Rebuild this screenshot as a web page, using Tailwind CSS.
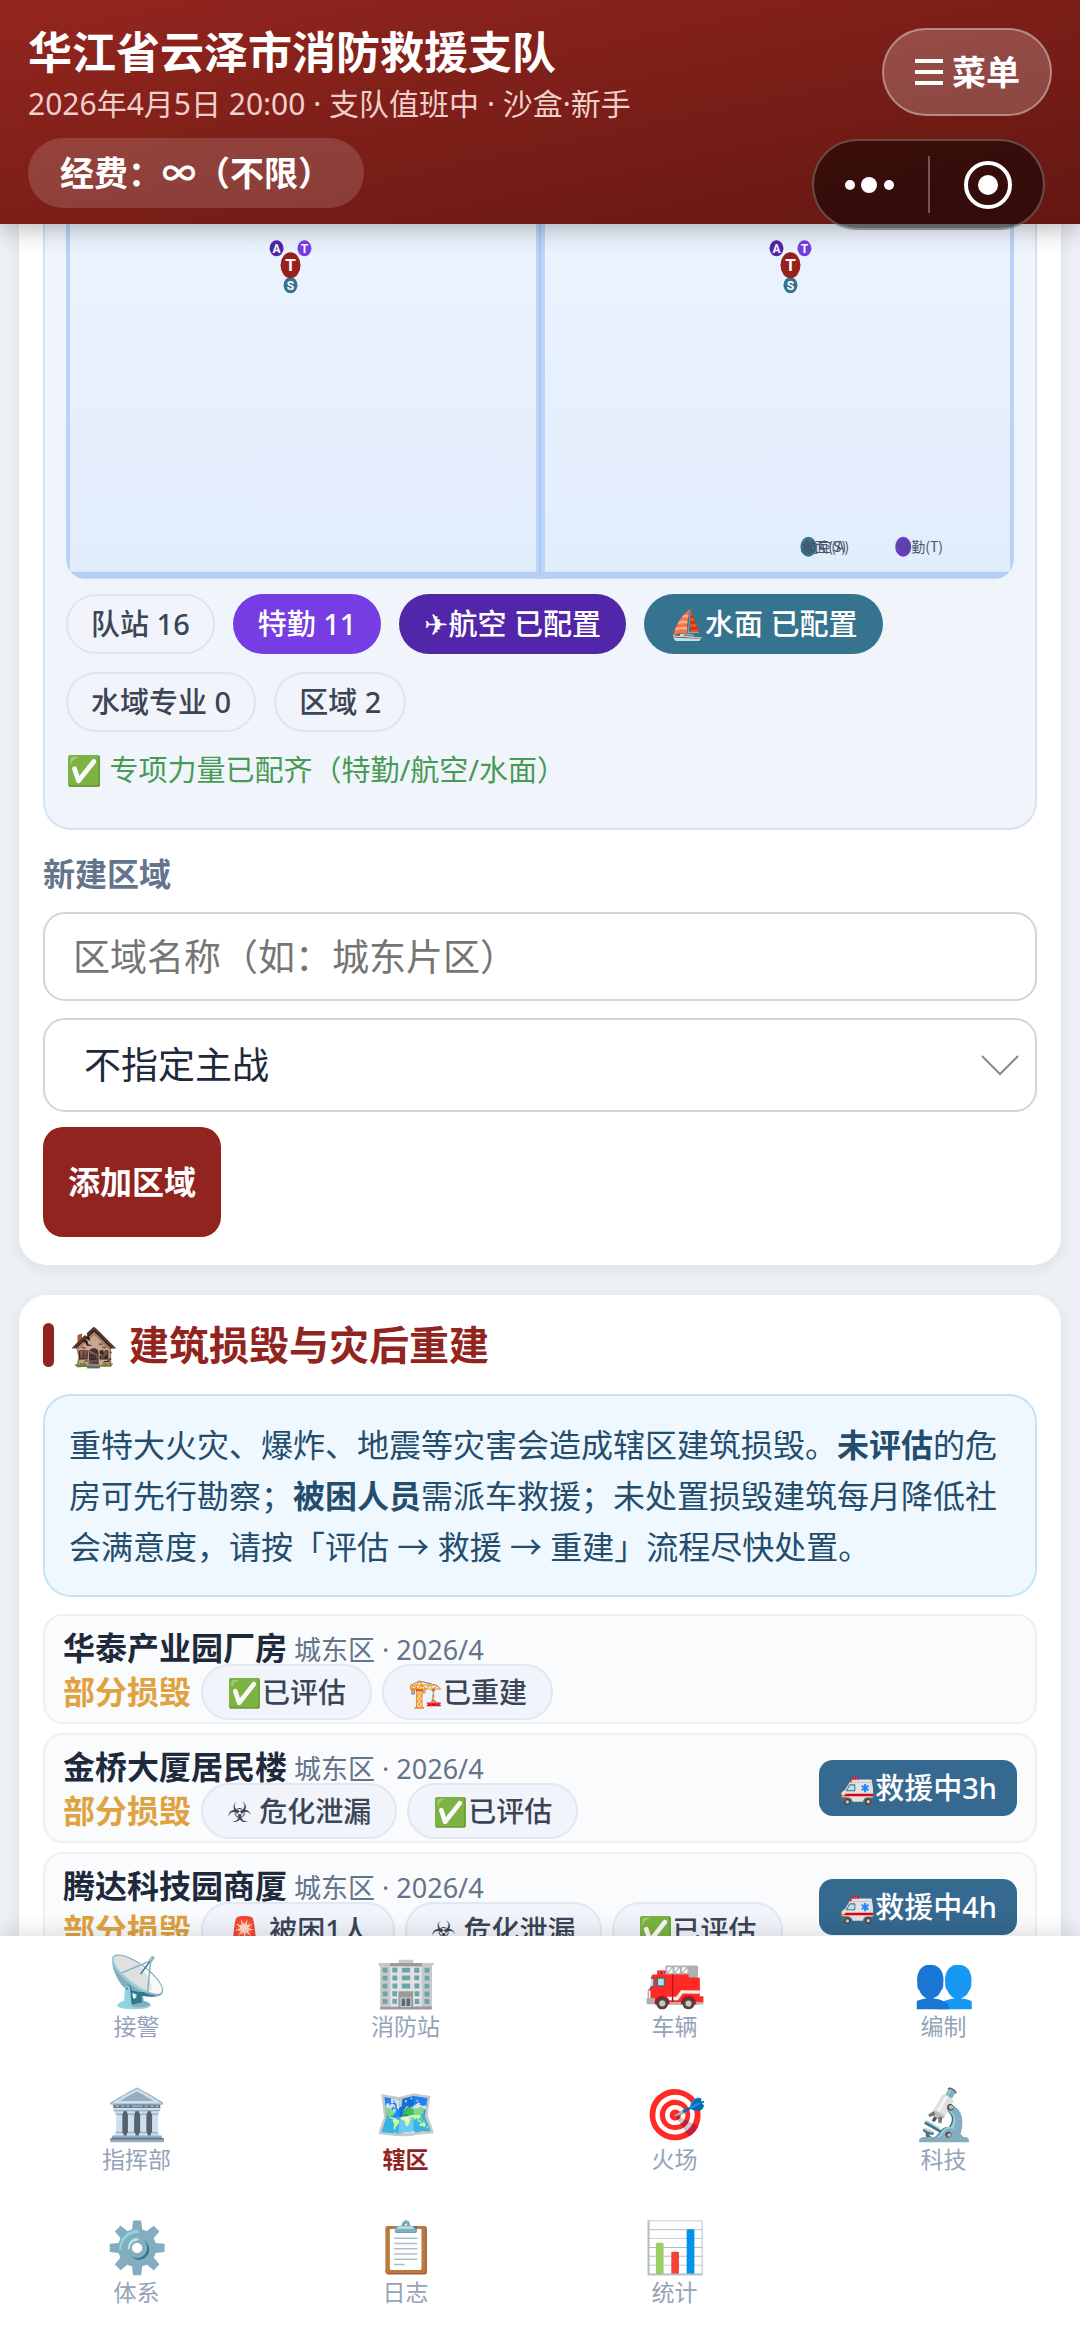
<!DOCTYPE html>
<html lang="zh-CN">
  <head>
    <meta charset="UTF-8" />
    <meta name="viewport" content="width=device-width, initial-scale=1.0" />
    <title>华江省云泽市消防救援支队</title>
    <script src="https://cdn.jsdelivr.net/npm/@tailwindcss/browser@4"></script>
  </head>
  <body
    class="h-screen flex flex-col overflow-hidden bg-[#edf0f5] text-[#1e293b] font-['Noto_Sans','Noto_Sans_CJK_SC',sans-serif]"
  >
    <!-- Header -->
    <header
      class="relative z-20 shrink-0 px-7 pt-7 pb-4 bg-linear-to-br from-[#94261f] to-[#641711] text-white shadow-[0_4px_24px_rgba(0,0,0,0.3)]"
    >
      <div class="flex justify-between items-start">
        <div>
          <h1 class="text-[44px] leading-[48px] font-bold">华江省云泽市消防救援支队</h1>
          <p class="mt-2 text-[30px] leading-[40px] text-[#f0cfcd]">
            2026年4月5日 20:00 · 支队值班中 · 沙盒·新手
          </p>
        </div>
        <button
          class="h-[88px] w-[170px] flex items-center justify-center gap-2 rounded-full border-2 border-white/35 bg-white/20 text-[34px] font-bold"
        >
          <svg class="w-[30px] h-[30px]" viewBox="0 0 30 30" fill="#fff">
            <path d="M1 2h28v4H1zM1 13h28v4H1zM1 24h28v4H1z" />
          </svg>
          菜单
        </button>
      </div>
      <div class="mt-[14px] w-fit h-[70px] px-8 flex items-center rounded-full bg-white/15 text-[34px] font-bold">
        经费：∞（不限）
      </div>
      <!-- Mini program capsule -->
      <div
        class="absolute right-[35px] top-[139px] w-[233px] h-[91px] rounded-full border-2 border-white/25 bg-black/50"
      >
        <svg viewBox="2 2 229 87" class="w-full h-full">
          <circle cx="38" cy="46" r="5" fill="#fff" />
          <circle cx="57" cy="46" r="8" fill="#fff" />
          <circle cx="77" cy="46" r="5" fill="#fff" />
          <path d="M117 17v57" stroke="#fff" stroke-opacity=".3" stroke-width="2" />
          <circle cx="176" cy="46" r="22" fill="none" stroke="#fff" stroke-width="4" />
          <circle cx="176" cy="46" r="10" fill="#fff" />
        </svg>
      </div>
    </header>

    <main class="flex-1 min-h-0 overflow-hidden px-[19px]">
      <!-- Zones -->
      <section class="rounded-b-[28px] bg-white px-6 pb-7 shadow-[0_4px_16px_rgba(30,50,90,0.08)]">
        <div class="rounded-b-[28px] border-2 border-t-0 border-[#d5e3f0] bg-[#f0f5fc] px-[21px] pb-[38px]">
          <div class="h-[355px] overflow-hidden rounded-b-[20px]">
            <svg class="block w-full h-full" viewBox="0 0 950 355" font-family="Noto Sans CJK SC" text-anchor="middle">
              <defs>
                <linearGradient id="map" x2="0" y2="1">
                  <stop stop-color="#ebf3fe" />
                  <stop offset="1" stop-color="#e2edfc" />
                </linearGradient>
                <g id="station" font-family="Roboto" font-weight="700" fill="#fff">
                  <ellipse cx="-14" cy="-17" rx="7" ry="8" fill="#5226a8" />
                  <ellipse cx="14" cy="-17" rx="7" ry="8" fill="#763ee2" />
                  <ellipse cx="0" cy="20" rx="7" ry="8" fill="#35738e" />
                  <ellipse cx="0" cy="0" rx="10" ry="13" fill="#97211d" />
                  <text x="-14" y="-12" font-size="12">A</text>
                  <text x="14" y="-12" font-size="12">T</text>
                  <text x="0" y="25" font-size="12">S</text>
                  <text x="0" y="6" font-size="17">T</text>
                </g>
              </defs>
              <rect width="950" height="355" fill="url(#map)" />
              <path d="M2 0V355M948 0V355" stroke="#b9d3f8" stroke-width="4" />
              <path d="M471 0h9V355h-9z" fill="#bdd5fa" />
              <path d="M0 348h950v7H0z" fill="#b7cff4" />
              <path d="M475 0V350" stroke="#a9c7f3" stroke-width="2" />
              <use href="#station" x="225" y="41" />
              <use href="#station" x="726" y="41" />
              <g font-size="14" fill="#475569" text-anchor="start">
                <ellipse cx="744" cy="323" rx="8" ry="10" fill="#35738e" />
                <ellipse cx="839" cy="323" rx="8" ry="10" fill="#6a38d4" />
                <text x="736" y="328">水面(S)</text>
                <text x="739" y="328">航空(A)</text>
                <text x="833" y="328">特勤(T)</text>
              </g>
            </svg>
          </div>
          <div class="mt-[15px] flex flex-wrap gap-[18px] text-[29px] leading-[40px] font-medium text-[#3b4555]">
            <span class="px-[23px] py-2 rounded-full border-2 border-[#dfe5ee] bg-[#f1f5fb]">队站 16</span>
            <span class="px-[25px] py-[10px] rounded-full bg-[#763ee2] text-white">特勤 11</span>
            <span class="px-[25px] py-[10px] rounded-full bg-[#5226a8] text-white">✈航空 已配置</span>
            <span class="px-[25px] py-[10px] rounded-full bg-[#35738e] text-white">⛵水面 已配置</span>
            <span class="px-[23px] py-2 rounded-full border-2 border-[#dfe5ee] bg-[#f1f5fb]">水域专业 0</span>
            <span class="px-[23px] py-2 rounded-full border-2 border-[#dfe5ee] bg-[#f1f5fb]">区域 2</span>
          </div>
          <p class="mt-[18px] text-[29px] leading-[40px] text-[#489a55]">✅ 专项力量已配齐（特勤/航空/水面）</p>
        </div>

        <label for="zone-name" class="block mt-5 text-[32px] leading-[48px] font-bold text-[#64748b]">新建区域</label>
        <input
          id="zone-name"
          type="text"
          placeholder="区域名称（如：城东片区）"
          class="block mt-[14px] w-full h-[89px] px-7 rounded-[22px] border-2 border-[#d0d5de] bg-white text-[37px] placeholder:text-[#757575]"
        />
        <div class="relative mt-[17px]">
          <select
            aria-label="主战"
            class="block appearance-none w-full h-[94px] px-[39px] rounded-[22px] border-2 border-[#d0d5de] bg-white text-[37px]"
          >
            <option>不指定主战</option>
          </select>
          <svg
            class="pointer-events-none absolute right-[18px] top-[36px] w-[38px] h-[22px]"
            viewBox="0 0 38 22"
            fill="none"
            stroke="#8a8a8a"
            stroke-width="2"
          >
            <path d="M1 2l18 18L37 2" />
          </svg>
        </div>
        <button class="block mt-[15px] h-[110px] px-[25px] rounded-[20px] bg-[#91241e] text-white text-[32px] font-bold">
          添加区域
        </button>
      </section>

      <!-- Damaged buildings -->
      <section class="mt-[30px] rounded-[28px] bg-white px-6 py-7 shadow-[0_4px_16px_rgba(30,50,90,0.08)]">
        <h2 class="flex items-center text-[40px] leading-[44px] font-bold text-[#91241e]">
          <span class="w-[11px] h-[44px] mr-[15px] rounded-full bg-[#91241e]"></span>
          <span class="mr-[10px]">🏚️</span>建筑损毁与灾后重建
        </h2>
        <p
          class="mt-[27px] px-6 py-[23px] rounded-[28px] border-2 border-[#c5e3f0] bg-[#f0f8ff] text-[32px] leading-[51px] text-[#244d6d]"
        >
          重特大火灾、爆炸、地震等灾害会造成辖区建筑损毁。<b>未评估</b>的危房可先行勘察；<b>被困人员</b>需派车救援；未处置损毁建筑每月降低社会满意度，请按「评估 → 救援 → 重建」流程尽快处置。
        </p>
        <ul class="mt-[17px] flex flex-col gap-[9px]">
          <li class="h-[110px] px-[18px] flex items-center justify-between rounded-[20px] border-2 border-[#edf1f6] bg-[#f9fbfd]">
            <div class="pt-1">
              <div class="text-[27px] leading-[40px] text-[#64748b]">
                <b class="text-[32px] text-[#1e293b]">华泰产业园厂房</b> 城东区 · 2026/4
              </div>
              <div class="h-[44px] flex items-center gap-[10px] text-[28px] leading-[40px] font-medium text-[#3b4555]">
                <b class="text-[32px] text-[#e0a240]">部分损毁</b>
                <span class="px-6 py-[6px] rounded-full border-2 border-[#e2e8f0] bg-[#f1f5fb]">✅已评估</span>
                <span class="px-6 py-[6px] rounded-full border-2 border-[#e2e8f0] bg-[#f1f5fb]">🏗️已重建</span>
              </div>
            </div>
          </li>
          <li class="h-[110px] px-[18px] flex items-center justify-between rounded-[20px] border-2 border-[#edf1f6] bg-[#f9fbfd]">
            <div class="pt-1">
              <div class="text-[27px] leading-[40px] text-[#64748b]">
                <b class="text-[32px] text-[#1e293b]">金桥大厦居民楼</b> 城东区 · 2026/4
              </div>
              <div class="h-[44px] flex items-center gap-[10px] text-[28px] leading-[40px] font-medium text-[#3b4555]">
                <b class="text-[32px] text-[#e0a240]">部分损毁</b>
                <span class="px-6 py-[6px] rounded-full border-2 border-[#e2e8f0] bg-[#f1f5fb]">☣ 危化泄漏</span>
                <span class="px-6 py-[6px] rounded-full border-2 border-[#e2e8f0] bg-[#f1f5fb]">✅已评估</span>
              </div>
            </div>
            <button class="h-[56px] px-5 rounded-[14px] bg-[#35698f] text-white text-[29px] font-medium">🚑救援中3h</button>
          </li>
          <li class="h-[110px] px-[18px] flex items-center justify-between rounded-[20px] border-2 border-[#edf1f6] bg-[#f9fbfd]">
            <div class="pt-1">
              <div class="text-[27px] leading-[40px] text-[#64748b]">
                <b class="text-[32px] text-[#1e293b]">腾达科技园商厦</b> 城东区 · 2026/4
              </div>
              <div class="h-[44px] flex items-center gap-[10px] text-[28px] leading-[40px] font-medium text-[#3b4555]">
                <b class="text-[32px] text-[#e0a240]">部分损毁</b>
                <span class="px-6 py-[6px] rounded-full border-2 border-[#e2e8f0] bg-[#f1f5fb]">🚨 被困1人</span>
                <span class="px-6 py-[6px] rounded-full border-2 border-[#e2e8f0] bg-[#f1f5fb]">☣ 危化泄漏</span>
                <span class="px-6 py-[6px] rounded-full border-2 border-[#e2e8f0] bg-[#f1f5fb]">✅已评估</span>
              </div>
            </div>
            <button class="h-[56px] px-5 rounded-[14px] bg-[#35698f] text-white text-[29px] font-medium">🚑救援中4h</button>
          </li>
        </ul>
      </section>
    </main>

    <!-- Bottom tabs -->
    <nav
      class="relative z-10 shrink-0 grid grid-cols-4 gap-y-[41px] px-0.5 pt-[14px] pb-9 bg-white text-center text-[23px] leading-[32px] text-[#94a3b8] shadow-[0_-4px_20px_rgba(0,0,0,0.12)]"
    >
      <a href="#"><span class="block text-[50px] leading-[60px]">📡</span>接警</a>
      <a href="#"><span class="block text-[50px] leading-[60px]">🏢</span>消防站</a>
      <a href="#"><span class="block text-[50px] leading-[60px]">🚒</span>车辆</a>
      <a href="#"><span class="block text-[50px] leading-[60px]">👥</span>编制</a>
      <a href="#"><span class="block text-[50px] leading-[60px]">🏛️</span>指挥部</a>
      <a href="#" class="font-bold text-[#91241e]"><span class="block text-[50px] leading-[60px]">🗺️</span>辖区</a>
      <a href="#"><span class="block text-[50px] leading-[60px]">🎯</span>火场</a>
      <a href="#"><span class="block text-[50px] leading-[60px]">🔬</span>科技</a>
      <a href="#"><span class="block text-[50px] leading-[60px]">⚙️</span>体系</a>
      <a href="#"><span class="block text-[50px] leading-[60px]">📋</span>日志</a>
      <a href="#"><span class="block text-[50px] leading-[60px]">📊</span>统计</a>
    </nav>
  </body>
</html>
